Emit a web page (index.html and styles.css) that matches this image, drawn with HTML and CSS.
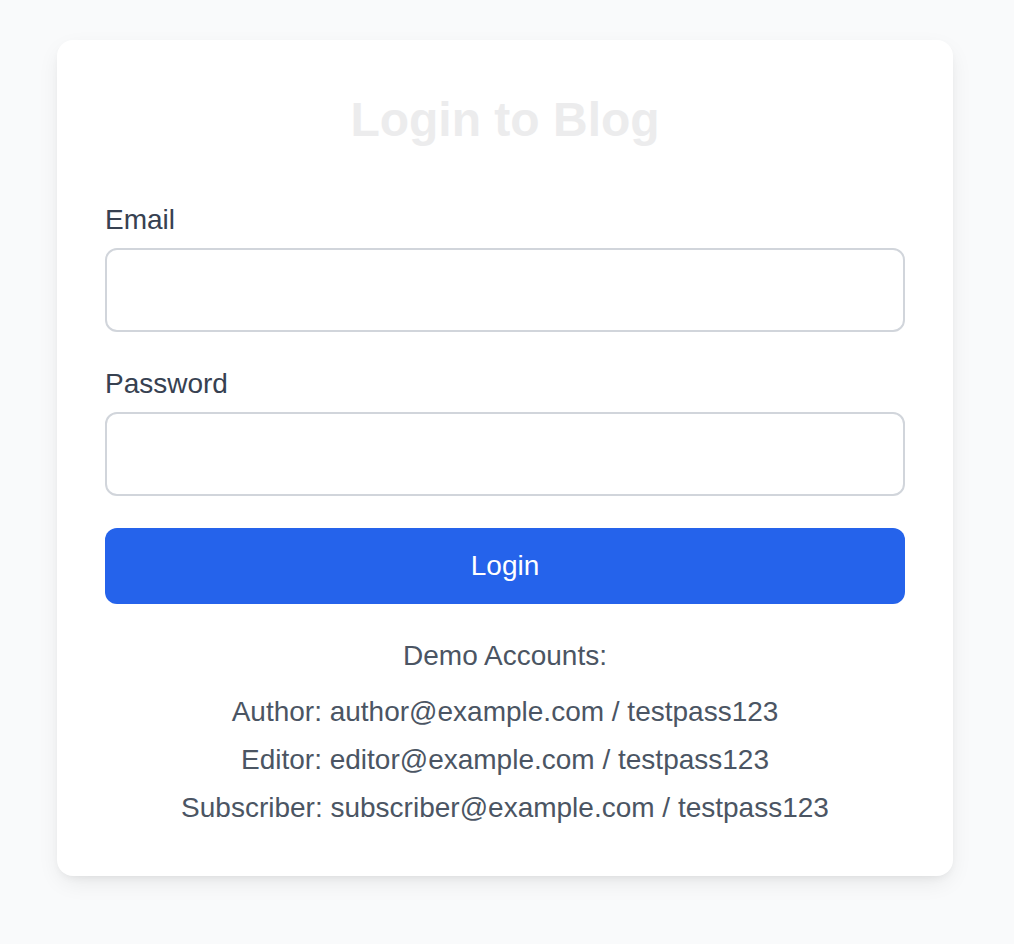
FILE: index.html
```html
<!DOCTYPE html>
<html lang="en">
<head>
<meta charset="utf-8">
<title>Login to Blog</title>
<link rel="stylesheet" href="styles.css">
</head>
<body>
<div class="page">
  <div class="card">
    <h1 class="title">Login to Blog</h1>
    <form class="form">
      <div class="field">
        <label class="label" for="email">Email</label>
        <input class="input" id="email" type="email">
      </div>
      <div class="field">
        <label class="label" for="password">Password</label>
        <input class="input" id="password" type="password">
      </div>
      <button class="button" type="button">Login</button>
    </form>
    <div class="demo">
      <p class="demo-title">Demo Accounts:</p>
      <p class="demo-line">Author: author@example.com / testpass123</p>
      <p class="demo-line">Editor: editor@example.com / testpass123</p>
      <p class="demo-line">Subscriber: subscriber@example.com / testpass123</p>
    </div>
  </div>
</div>
</body>
</html>
```

FILE: styles.css
```css
* { box-sizing: border-box; }
html, body {
  margin: 0;
  padding: 0;
  background: #f9fafb;
  font-family: "Liberation Sans", Arial, Helvetica, sans-serif;
  min-height: 100%;
}
.page {
  padding: 40px 61px 40px 57px;
}
.card {
  width: 896px;
  margin: 0 auto;
  background: #ffffff;
  border-radius: 16px;
  padding: 48px;
  box-shadow: 0 8px 24px -4px rgba(0, 0, 0, 0.09), 0 4px 10px -4px rgba(0, 0, 0, 0.08);
}
.title {
  margin: 0 0 48px;
  font-size: 48px;
  line-height: 64px;
  font-weight: 700;
  text-align: center;
  color: #ececed;
}
.form {
  display: flex;
  flex-direction: column;
  gap: 32px;
  margin: 0;
}
.field {
  display: flex;
  flex-direction: column;
}
.label {
  font-size: 28px;
  line-height: 40px;
  color: #374151;
  margin-bottom: 8px;
}
.input {
  height: 84px;
  border: 2px solid #d1d5db;
  border-radius: 12px;
  background: #fff;
  font-size: 28px;
  padding: 0 24px;
  font-family: inherit;
  outline: none;
}
.button {
  height: 76px;
  border: none;
  border-radius: 12px;
  background: #2563eb;
  color: #ffffff;
  font-family: inherit;
  font-size: 28px;
  line-height: 40px;
  cursor: pointer;
}
.demo {
  margin-top: 32px;
  text-align: center;
  color: #4b5563;
  font-size: 28px;
  line-height: 40px;
  display: flex;
  flex-direction: column;
  gap: 8px;
}
.demo p { margin: 0; }
.demo-title { margin-bottom: 8px !important; }
```
